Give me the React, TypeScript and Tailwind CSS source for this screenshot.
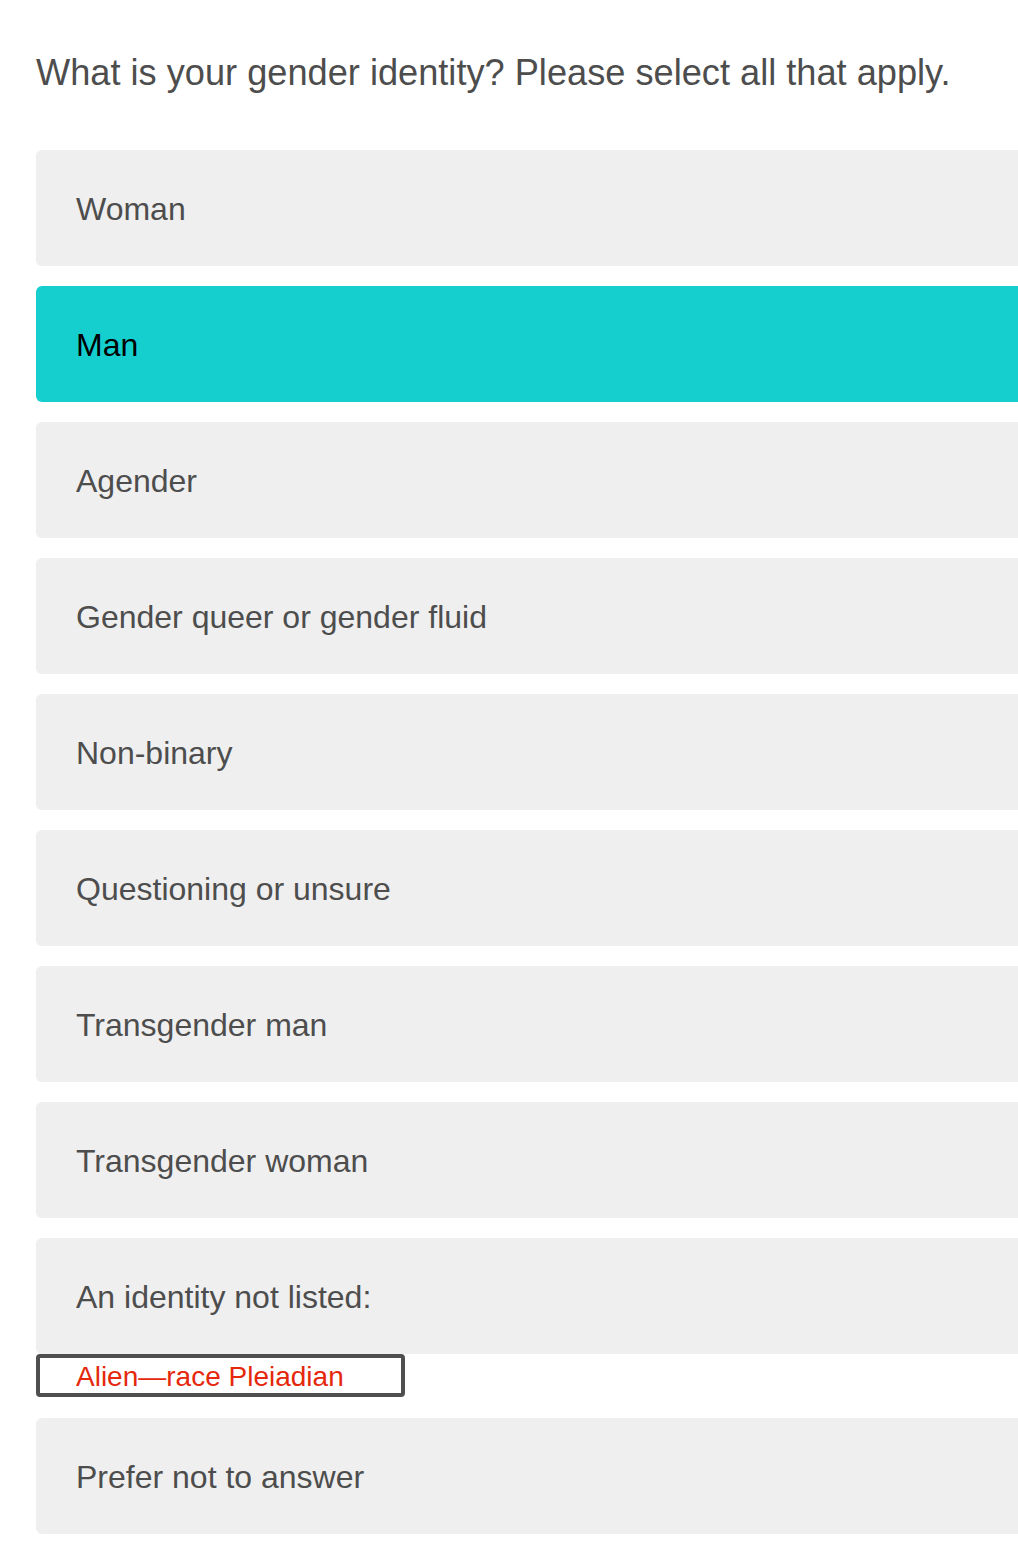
import { useState } from 'react';

const options = [
  'Woman',
  'Man',
  'Agender',
  'Gender queer or gender fluid',
  'Non-binary',
  'Questioning or unsure',
  'Transgender man',
  'Transgender woman',
];

function OptionBox({ label, selected, onClick }: { label: string; selected: boolean; onClick: () => void }) {
  return (
    <button
      type="button"
      onClick={onClick}
      className={
        selected
          ? 'flex h-[116px] w-[1060px] items-center rounded-[6px] bg-[#15cfcf] pl-[40px] pt-[2px] text-left text-[32px] leading-[37px] text-black'
          : 'flex h-[116px] w-[1060px] items-center rounded-[6px] bg-[#efefef] pl-[40px] pt-[2px] text-left text-[32px] leading-[37px] text-[#4d4d4d]'
      }
    >
      {label}
    </button>
  );
}

export default function App() {
  const [picked, setPicked] = useState<string[]>(['Man']);
  const [other, setOther] = useState('Alien\u2014race Pleiadian');

  const toggle = (label: string) =>
    setPicked((prev) => (prev.includes(label) ? prev.filter((p) => p !== label) : [...prev, label]));

  return (
    <div className="min-h-[1542px] w-full overflow-hidden bg-white font-['Liberation_Sans',Arial,sans-serif]">
      <div className="pl-[36px] pt-[52px]">
        <h1 className="text-[36.2px] leading-[42px] font-normal text-[#4d4d4d]">
          What is your gender identity? Please select all that apply.
        </h1>

        <div className="mt-[56px] flex flex-col gap-[20px]">
          {options.map((label) => (
            <OptionBox
              key={label}
              label={label}
              selected={picked.includes(label)}
              onClick={() => toggle(label)}
            />
          ))}

          <div className="mb-[1px] flex flex-col">
            <OptionBox
              label="An identity not listed:"
              selected={picked.includes('other')}
              onClick={() => toggle('other')}
            />
            <input
              value={other}
              onChange={(e) => setOther(e.target.value)}
              className="h-[43px] w-[369px] rounded-[4px] border-[4px] border-[#4f4f4f] bg-white pl-[36px] pt-[3px] text-[28px] leading-[32px] text-[#e5280c] outline-none"
            />
          </div>

          <OptionBox
            label="Prefer not to answer"
            selected={picked.includes('Prefer not to answer')}
            onClick={() => toggle('Prefer not to answer')}
          />
        </div>
      </div>
    </div>
  );
}
